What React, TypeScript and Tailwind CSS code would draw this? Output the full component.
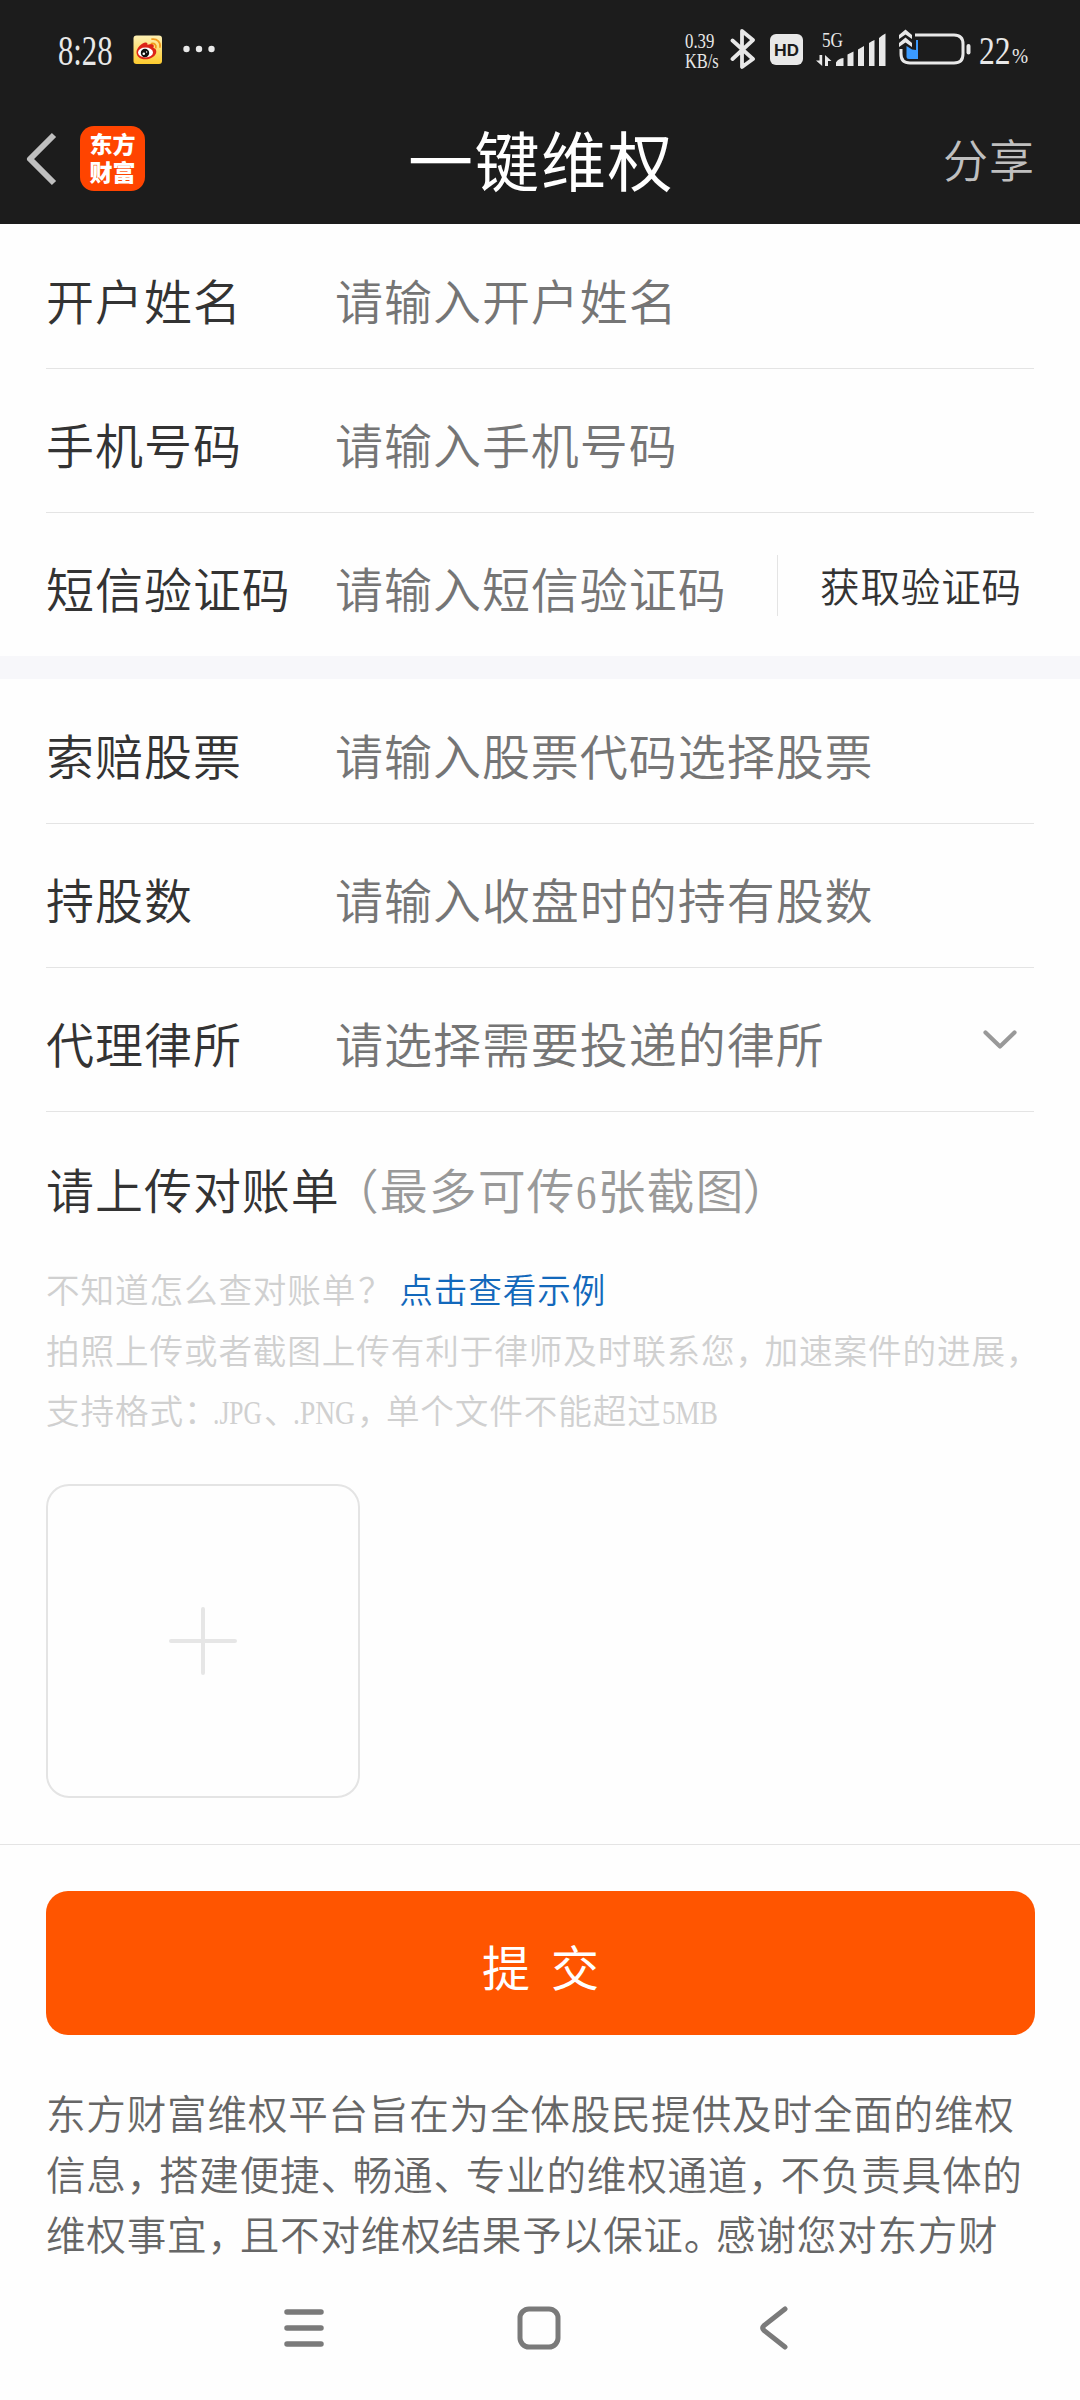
import type { ReactNode } from 'react';

const accountFields = [
  { label: '开户姓名', placeholder: '请输入开户姓名' },
  { label: '手机号码', placeholder: '请输入手机号码' },
];

// Narrow full-width punctuation used in the body copy
function Mark({ children, small }: { children: ReactNode; small?: boolean }) {
  return <span className={small ? 'tracking-[-4.600px]' : 'tracking-[-7.300px]'}>{children}</span>;
}

function Condensed({ children, className }: { children: ReactNode; className: string }) {
  return (
    <span className={`block origin-left whitespace-nowrap font-['Liberation_Serif',serif] ${className}`}>
      {children}
    </span>
  );
}

function Field({ label, placeholder, first, children }: {
  label: string;
  placeholder: string;
  first?: boolean;
  children?: ReactNode;
}) {
  return (
    <div className={`mx-[46px] flex h-36 items-center pt-[15px] text-[48px] leading-none tracking-[0.96px] ${first ? '' : 'border-t border-[#e4e4e4]'}`}>
      <span className="w-[289px] shrink-0 text-[#333]">{label}</span>
      <span className="whitespace-nowrap text-[#757575]">{placeholder}</span>
      {children}
    </div>
  );
}

function StatusBar() {
  return (
    <div className="flex h-[98px] items-center pl-[58px] text-[#e8e8e8]">
      <div className="w-[75px]">
        <Condensed className="scale-x-[0.73] pt-[3px] text-[42px] font-normal leading-none">8:28</Condensed>
      </div>
      <svg width="30" height="30" viewBox="0 0 30 30" className="mt-[2px]">
        <defs>
          <linearGradient id="weibo" x1="0" y1="0" x2="0" y2="1">
            <stop offset="0" stopColor="#fdf0b4" />
            <stop offset="1" stopColor="#fdcb2e" />
          </linearGradient>
        </defs>
        <rect x="0.5" y="0.5" width="28.5" height="28.5" rx="3" fill="url(#weibo)" />
        <path d="M3.500 17c0-4 6-10 9.500-9.500 2 .3 1.500 2.500 1.500 2.500s4.500-2 6 0c.8 1.200-.2 2.800-.2 2.800s3 .7 3 3.700c0 4.500-5.500 7.800-11 7.800S3.500 21.500 3.500 17z" fill="#dd2418" />
        <ellipse cx="12.500" cy="17.500" rx="7.500" ry="4.900" fill="#fff" />
        <circle cx="12" cy="18" r="4.200" fill="#111" />
        <circle cx="10.800" cy="18.800" r="1.300" fill="#fff" />
        <circle cx="13.600" cy="17" r="0.7" fill="#fff" />
        <path d="M18.500 8.500c3-.6 5 1.500 4.300 4.200M19 4.200c5-.8 9 3 8 8" fill="none" stroke="#f39a1c" strokeWidth="1.700" strokeLinecap="round" />
      </svg>
      <svg width="34" height="8" viewBox="0 0 34 8" className="ml-5 fill-[#e8e8e8]">
        <circle cx="3.500" cy="4" r="3.200" />
        <circle cx="16" cy="4" r="3.200" />
        <circle cx="28.500" cy="4" r="3.200" />
      </svg>

      <div className="ml-[468px] w-[45px] pt-[3px] text-[21px] leading-[20px]">
        <Condensed className="scale-x-[0.8]">0.39</Condensed>
        <Condensed className="scale-x-[0.78]">KB/s</Condensed>
      </div>
      <svg width="26" height="42" viewBox="0 0 26 42" fill="none" stroke="#e8e8e8" strokeWidth="3.800" strokeLinejoin="round" strokeLinecap="round">
        <path d="M2.500 12.500 L23 31 L12 39 V3 L23 12 L2.500 31" />
      </svg>
      <svg width="33" height="31" viewBox="0 0 33 31" className="ml-[14px]">
        <rect width="33" height="31" rx="6" fill="#e8e8e8" />
        <text x="16.500" y="21.500" textAnchor="middle" textLength="25" lengthAdjust="spacingAndGlyphs" fontFamily="Inter, sans-serif" fontSize="16" fontWeight="700" fill="#1c1c1c">HD</text>
      </svg>
      <svg width="72" height="48" viewBox="0 -6 72 48" className="ml-[12px]" fill="#e8e8e8">
        <text x="7" y="16" textLength="21" lengthAdjust="spacingAndGlyphs" fontFamily="Liberation Serif, serif" fontSize="21">5G</text>
        <path d="M4.500 24h2.700v11L1 29.500h3.500zM10 24l6.500 6H13v5h-3z" />
        <path d="M21 35v-3.500q2-4 7.500-4.500V35zM32.500 35V23.500q3-1.500 6-3V35zM43 35V18.500q3-2 6-3.500V35zM54 35V12q3-2 5.500-3V35zM64 35V7q3-3 6.500-4.500V35z" />
      </svg>
      <svg width="76" height="40" viewBox="0 0 76 40" className="ml-[11px]" fill="none">
        <path d="M17 6h39q9 0 9 9v10q0 9-9 9H12q-9 0-9-9v-5" stroke="#e8e8e8" strokeWidth="3" />
        <path d="M8.500 17 L14 20.500 18 21V11h2v19H11q-2.500 0-2.500-2.500z" fill="#3b9bff" />
        <path d="M1 10V6L7.500 0.500 14 6v4L7.500 5.500zM1 18V14L7.500 8.500 14 14v4L7.500 13.500z" fill="#e8e8e8" />
        <rect x="68.500" y="15" width="4" height="10.500" rx="2" fill="#e8e8e8" />
      </svg>
      <div className="ml-[5px] w-[33px]">
        <Condensed className="w-[33px] scale-x-[0.79] pt-[3px] text-[40px] leading-none">22</Condensed>
      </div>
      <Condensed className="scale-x-[0.88] pt-[13px] text-[22px] leading-none">%</Condensed>
    </div>
  );
}

function TitleBar() {
  return (
    <div className="flex h-[126px] items-center pb-[5px]">
      <div className="flex w-[408px] items-center pl-[25px]">
        <svg width="33" height="54" viewBox="0 0 33 54" fill="none" stroke="#bfbfbf" strokeWidth="6" strokeLinejoin="round">
          <path d="M29 3 L5 27 L29 51" />
        </svg>
        <div className="ml-[22px] flex h-[65px] w-[65px] flex-col items-center justify-center rounded-[14px] bg-[#ff4400] pt-[2px] text-[23px] font-black leading-[28px] text-white">
          <span>东方</span>
          <span>财富</span>
        </div>
      </div>
      <h1 className="w-[535px] pt-[11px] text-[65px] font-normal leading-none tracking-[1.500px] text-white">一键维权</h1>
      <span className="pt-[9px] text-[45px] leading-none tracking-[1px] text-[#bfbfbf]">分享</span>
    </div>
  );
}

export default function App() {
  return (
    <div className="flex h-[2400px] w-[1080px] flex-col overflow-hidden bg-[#fefefe] font-['Liberation_Serif','Noto_Sans_CJK_SC',sans-serif] font-[350]">
      <header className="h-[224px] shrink-0 bg-[#1c1c1c]">
        <StatusBar />
        <TitleBar />
      </header>

      <section>
        {accountFields.map((field, i) => (
          <Field key={field.label} label={field.label} placeholder={field.placeholder} first={i === 0} />
        ))}
        <Field label="短信验证码" placeholder="请输入短信验证码">
          <span className="-mt-[14px] ml-auto h-[61px] w-px shrink-0 bg-[#e4e4e4]" />
          <span className="-mt-[4px] ml-[42px] w-[214px] shrink-0 whitespace-nowrap text-[39.6px] tracking-[0.8px] text-[#333]">获取验证码</span>
        </Field>
      </section>

      <div className="h-[23px] shrink-0 bg-[#f7f7fa]" />

      <section>
        <Field label="索赔股票" placeholder="请输入股票代码选择股票" first />
        <Field label="持股数" placeholder="请输入收盘时的持有股数" />
        <Field label="代理律所" placeholder="请选择需要投递的律所">
          <svg width="34" height="20" viewBox="0 0 34 20" className="-mt-[15px] ml-auto mr-[17px]" fill="none" stroke="#999" strokeWidth="4.200" strokeLinecap="round" strokeLinejoin="round">
            <path d="M2.500 2.500 L17 16.500 L31.500 2.500" />
          </svg>
        </Field>
      </section>

      <section className="h-[733px] shrink-0 px-[46px]">
        <h2 className="flex h-[156px] items-center whitespace-nowrap border-t border-[#e4e4e4] pt-[6px] text-[48px] leading-none tracking-[0.96px] text-[#333]">
          请上传对账单
          <span className="flex text-[#999]">
            <span className="ml-[15px] [font-feature-settings:'halt']">（</span>
            最多可传
            <span className="w-[22px]"><Condensed className="w-[22px] scale-x-[0.85] tracking-normal">6</Condensed></span>
            张截图
            <span className="-ml-[2px] [font-feature-settings:'halt']">）</span>
          </span>
        </h2>
        <div className="-mt-[5px] whitespace-nowrap text-[33.6px] leading-[60.5px] tracking-[0.9px] text-[#d0d0d0]">
          <p>
            不知道怎么查对账单<span className="inline-block w-[43px] pl-[2px]">？</span>
            <a className="text-[#1268bb]">点击查看示例</a>
          </p>
          <p>
            拍照上传或者截图上传有利于律师及时联系您<Mark small>，</Mark>加速案件的进展<Mark small>，</Mark>
          </p>
          <p className="flex">
            支持格式<Mark small>：</Mark>
            <span className="w-[51px]"><Condensed className="w-[51px] scale-x-[0.76] tracking-normal">.JPG</Condensed></span>
            <Mark small>、</Mark>
            <span className="w-[64px]"><Condensed className="w-[64px] scale-x-[0.82] tracking-normal">.PNG</Condensed></span>
            <Mark small>，</Mark>
            单个文件不能超过
            <Condensed className="scale-x-[0.81] tracking-normal">5MB</Condensed>
          </p>
        </div>
        <button className="mt-[40px] flex h-[314px] w-[314px] items-center justify-center rounded-[23px] border-2 border-[#e4e4e4]">
          <svg width="68" height="68" viewBox="0 0 68 68" stroke="#e6e6e6" strokeWidth="4" strokeLinecap="round">
            <path d="M34 2v64M2 34h64" />
          </svg>
        </button>
      </section>

      <section className="shrink-0 border-t border-[#e4e4e4] px-[46px] pt-[46px]">
        <button className="flex h-36 w-[989px] items-center justify-center rounded-[22px] bg-[#ff5500] pt-[14px] text-[48px] font-normal leading-none text-white">
          <span className="mr-[21px]">提</span>
          <span>交</span>
        </button>
        <div className="mt-[51px] whitespace-nowrap text-[39.6px] leading-[60.5px] tracking-[0.78px] text-[#666]">
          <p>东方财富维权平台旨在为全体股民提供及时全面的维权</p>
          <p>
            信息<Mark>，</Mark>搭建便捷<Mark>、</Mark>畅通<Mark>、</Mark>专业的维权通道<Mark>，</Mark>不负责具体的
          </p>
          <p>
            维权事宜<Mark>，</Mark>且不对维权结果予以保证<Mark>。</Mark>感谢您对东方财
          </p>
        </div>
      </section>

      <nav className="mt-auto flex h-[130px] shrink-0 items-center pb-[14px] pl-[283px]">
        <svg width="42" height="44" viewBox="0 0 42 44" stroke="#7a7a7a" strokeWidth="5.500" strokeLinecap="round">
          <path d="M4 6h34M4 22h34M4 38h34" />
        </svg>
        <svg width="44" height="44" viewBox="0 0 44 44" className="ml-[192px]" fill="none" stroke="#7a7a7a" strokeWidth="5">
          <rect x="3" y="3" width="38" height="38" rx="9" />
        </svg>
        <svg width="30" height="44" viewBox="0 0 30 44" className="ml-[198px]" fill="none" stroke="#7a7a7a" strokeWidth="5" strokeLinecap="round">
          <path d="M26 3 L5 19.500 Q2.500 22 5 24.500 L26 41" />
        </svg>
      </nav>
    </div>
  );
}
